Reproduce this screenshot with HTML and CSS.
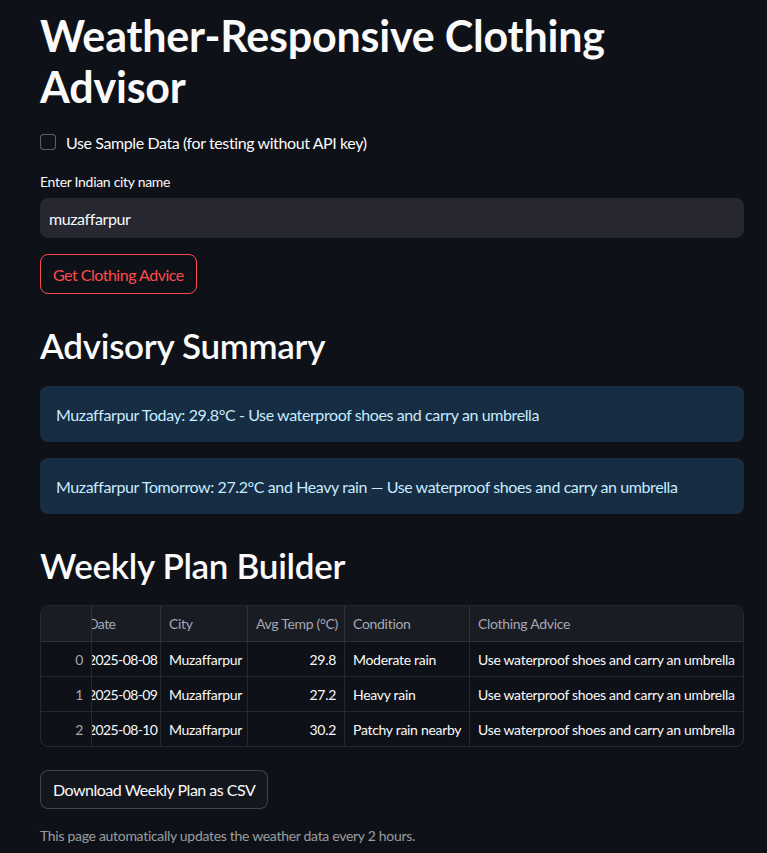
FILE: index.html
```html
<!DOCTYPE html>
<html lang="en">
<head>
<meta charset="utf-8">
<title>Weather-Responsive Clothing Advisor</title>
<link rel="stylesheet" href="styles.css">
</head>
<body>
<main class="main">
  <h1 class="title">Weather-Responsive Clothing Advisor</h1>

  <label class="checkbox">
    <span class="box"></span>
    <span class="checkbox-label">Use Sample Data (for testing without API key)</span>
  </label>

  <div class="field">
    <div class="field-label">Enter Indian city name</div>
    <div class="input">muzaffarpur</div>
  </div>

  <div class="btn-row"><button class="btn btn-primary">Get Clothing Advice</button></div>

  <h2 class="h2 h2-first">Advisory Summary</h2>
  <div class="info">Muzaffarpur Today: 29.8°C - Use waterproof shoes and carry an umbrella</div>
  <div class="info">Muzaffarpur Tomorrow: 27.2°C and Heavy rain — Use waterproof shoes and carry an umbrella</div>

  <h2 class="h2">Weekly Plan Builder</h2>
  <div class="table">
    <div class="row head">
      <div class="cell c-idx"></div>
      <div class="cell c-date"><span class="clip">Date</span></div>
      <div class="cell c-city">City</div>
      <div class="cell c-temp">Avg Temp (°C)</div>
      <div class="cell c-cond">Condition</div>
      <div class="cell c-adv">Clothing Advice</div>
    </div>
    <div class="row">
      <div class="cell c-idx num">0</div>
      <div class="cell c-date"><span class="clip">2025-08-08</span></div>
      <div class="cell c-city">Muzaffarpur</div>
      <div class="cell c-temp num">29.8</div>
      <div class="cell c-cond">Moderate rain</div>
      <div class="cell c-adv">Use waterproof shoes and carry an umbrella</div>
    </div>
    <div class="row">
      <div class="cell c-idx num">1</div>
      <div class="cell c-date"><span class="clip">2025-08-09</span></div>
      <div class="cell c-city">Muzaffarpur</div>
      <div class="cell c-temp num">27.2</div>
      <div class="cell c-cond">Heavy rain</div>
      <div class="cell c-adv">Use waterproof shoes and carry an umbrella</div>
    </div>
    <div class="row last">
      <div class="cell c-idx num">2</div>
      <div class="cell c-date"><span class="clip">2025-08-10</span></div>
      <div class="cell c-city">Muzaffarpur</div>
      <div class="cell c-temp num">30.2</div>
      <div class="cell c-cond">Patchy rain nearby</div>
      <div class="cell c-adv">Use waterproof shoes and carry an umbrella</div>
    </div>
  </div>

  <div class="btn-row dl-row"><button class="btn btn-secondary">Download Weekly Plan as CSV</button></div>

  <p class="caption">This page automatically updates the weather data every 2 hours.</p>
</main>
</body>
</html>
```

FILE: styles.css
```css
* { box-sizing: border-box; }
html, body {
  margin: 0;
  padding: 0;
  background: #0e1117;
  color: #fafafa;
  font-family: "Lato", "Noto Sans", sans-serif;
}
.main {
  width: 704px;
  margin: 0 0 0 40px;
  padding-top: 10px;
  display: flex;
  flex-direction: column;
  letter-spacing: -0.4px;
}
.title {
  font-size: 43px;
  font-weight: 700;
  line-height: 51px;
  margin: 0 0 18px 0;
  letter-spacing: -0.2px;
}
.checkbox {
  display: flex;
  align-items: center;
  gap: 10px;
  height: 24px;
  font-size: 16px;
}
.box {
  width: 16px;
  height: 16px;
  border: 1px solid rgba(250,250,250,0.35);
  border-radius: 4px;
  background: #0e1117;
}
.field { margin-top: 18px; }
.field-label {
  font-size: 14px;
  line-height: 20px;
  height: 26px;
  letter-spacing: -0.3px;
}
.input {
  height: 40px;
  background: #262730;
  border-radius: 8px;
  padding: 0 9px;
  display: flex;
  align-items: center;
  font-size: 16px;
}
.btn-row { margin-top: 16px; display: flex; }
.btn {
  font-family: inherit;
  font-size: 16px;
  letter-spacing: -0.5px;
  height: 40px;
  padding: 0 12px;
  border-radius: 8px;
  background: transparent;
  cursor: pointer;
}
.btn-primary {
  border: 1px solid #ff4b4b;
  color: #ff4b4b;
}
.btn-secondary {
  border: 1px solid rgba(250,250,250,0.2);
  color: #fafafa;
  background: #13161d;
  height: 39px;
}
.h2 {
  font-size: 35px;
  font-weight: 600;
  line-height: 42px;
  margin: 34px 0 19px 0;
  letter-spacing: -0.3px;
}
.h2-first { margin-top: 30px; margin-bottom: 20px; }
.info {
  background: #172d43;
  color: #c7ebff;
  border-radius: 8px;
  height: 56px;
  padding: 0 16px;
  display: flex;
  align-items: center;
  font-size: 16px;
  margin-bottom: 16px;
}
.info + .h2 { margin-top: 14px; }
.table {
  border: 1px solid rgba(250,250,250,0.1);
  border-radius: 8px;
  overflow: hidden;
  font-size: 14px;
  letter-spacing: -0.3px;
}
.row {
  display: flex;
  height: 35px;
  border-bottom: 1px solid rgba(250,250,250,0.1);
}
.row.last { border-bottom: none; height: 34px; }
.row.head {
  height: 36px;
  background: #1a1c24;
  color: #a3a8b4;
}
.cell {
  display: flex;
  align-items: center;
  padding: 0 8px;
  border-right: 1px solid rgba(250,250,250,0.1);
  white-space: nowrap;
  overflow: hidden;
}
.cell:last-child { border-right: none; }
.num { justify-content: flex-end; }
.c-idx { width: 51px; color: #a3a8b4; }
.c-date { width: 69px; padding: 0; }
.clip { margin-left: -4px; letter-spacing: -0.6px; }
.c-city { width: 87px; }
.c-temp { width: 97px; }
.c-cond { width: 125px; }
.c-adv { flex: 1; }
.dl-row { margin-top: 23px; }
.caption {
  margin: 18px 0 0 0;
  font-size: 14px;
  letter-spacing: -0.3px;
  color: rgba(250,250,250,0.6);
}
```
